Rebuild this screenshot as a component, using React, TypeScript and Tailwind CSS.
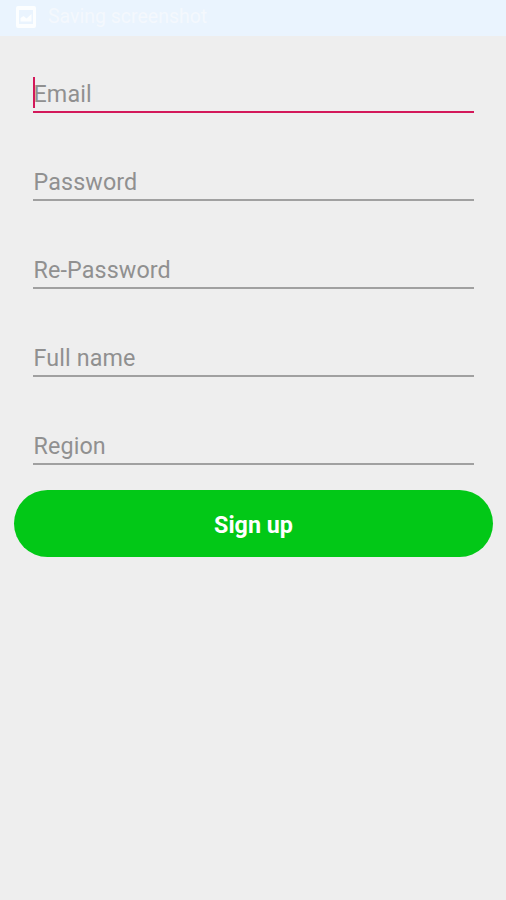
import { useState } from 'react';
import clsx from 'clsx';

const FIELDS = [
  { name: 'email', label: 'Email', type: 'email' },
  { name: 'password', label: 'Password', type: 'password' },
  { name: 'rePassword', label: 'Re-Password', type: 'password' },
  { name: 'fullName', label: 'Full name', type: 'text' },
  { name: 'region', label: 'Region', type: 'text' },
];

function StatusBar() {
  return (
    <div className="flex h-9 items-start bg-[#eaf4fe] pl-4 pt-[6px]">
      <svg viewBox="0 0 20 22" className="h-[22px] w-5">
        <path
          fill="#fcfeff"
          fillRule="evenodd"
          d="M2 0h16a2 2 0 0 1 2 2v18a2 2 0 0 1-2 2H2a2 2 0 0 1-2-2V2a2 2 0 0 1 2-2zM3 4v14h14V4z"
        />
        <path fill="#fcfeff" d="M4.500 15.500V12l3-2 3 2.500 5-4.500v7.500z" />
      </svg>
      <span className="ml-3 text-[19.500px] leading-[22px] text-[#f4f8fd]">Saving screenshot</span>
    </div>
  );
}

interface FieldProps {
  name: string;
  label: string;
  type: string;
  active: boolean;
  onFocus: () => void;
}

function Field({ name, label, type, active, onFocus }: FieldProps) {
  const [value, setValue] = useState('');

  return (
    <div
      className={clsx(
        'relative h-10',
        active ? 'border-b-2 border-[#d3185a]' : 'border-b-2 border-[#a0a0a0]'
      )}
    >
      <input
        name={name}
        type={type}
        value={value}
        placeholder={label}
        aria-label={label}
        onFocus={onFocus}
        onChange={(e) => setValue(e.target.value)}
        className="block h-[41px] w-full bg-transparent pl-[0.500px] text-[23.300px] tracking-[0.120px] text-[#333333] caret-[#d3185a] outline-none placeholder:text-[#909090] placeholder:opacity-100"
      />
      {/* Cursor in the empty active field */}
      {active && !value && <span className="absolute left-0 top-1 h-[31px] w-[2px] bg-[#d3185a]" />}
    </div>
  );
}

export default function App() {
  const [active, setActive] = useState('email');

  return (
    <div className="min-h-screen bg-[#eeeeee] font-[Roboto,sans-serif]">
      <StatusBar />
      <form className="pt-[37px]" onSubmit={(e) => e.preventDefault()}>
        <div className="flex flex-col gap-12 pl-[33px] pr-8">
          {FIELDS.map((field) => (
            <Field
              key={field.name}
              {...field}
              active={active === field.name}
              onFocus={() => setActive(field.name)}
            />
          ))}
        </div>
        <div className="pl-[14px] pr-[13px] pt-[25px]">
          <button
            type="submit"
            className="h-[67px] w-full rounded-full bg-[#02c817] pt-[3px] text-[23.300px] font-bold text-white"
          >
            Sign up
          </button>
        </div>
      </form>
    </div>
  );
}
